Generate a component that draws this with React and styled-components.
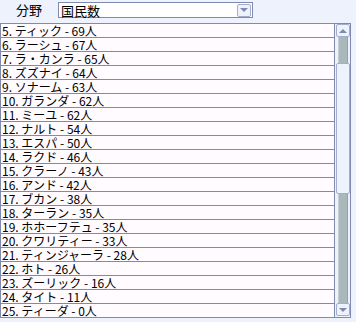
import React from "react";
import styled, { createGlobalStyle } from "styled-components";

const items = [
  ["5", "ティック", 69],
  ["6", "ラーシュ", 67],
  ["7", "ラ・カンラ", 65],
  ["8", "ズズナイ", 64],
  ["9", "ソナーム", 63],
  ["10", "ガランダ", 62],
  ["11", "ミーユ", 62],
  ["12", "ナルト", 54],
  ["13", "エスパ", 50],
  ["14", "ラクド", 46],
  ["15", "クラーノ", 43],
  ["16", "アンド", 42],
  ["17", "ブカン", 38],
  ["18", "ターラン", 35],
  ["19", "ホホーフテュ", 35],
  ["20", "クワリティー", 33],
  ["21", "ティンジャーラ", 28],
  ["22", "ホト", 26],
  ["23", "ズーリック", 16],
  ["24", "タイト", 11],
  ["25", "ティーダ", 0],
];

const GlobalStyle = createGlobalStyle`
  html, body {
    margin: 0;
    padding: 0;
    background: #eef2fc;
  }
  body {
    font-family: "Noto Sans CJK JP", "DejaVu Sans", sans-serif;
    color: #000;
  }
`;

const Page = styled.div`
  width: 356px;
  height: 322px;
  overflow: hidden;
`;

const Header = styled.div`
  display: flex;
  align-items: flex-start;
  height: 23px;
  padding-top: 2px;
  box-sizing: border-box;
`;

const Label = styled.span`
  width: 42px;
  padding-left: 16px;
  font-size: 13px;
  line-height: 16px;
`;

const Select = styled.div`
  width: 195px;
  height: 16px;
  box-sizing: border-box;
  border: 1px solid #7f8aae;
  background: #fff;
  display: flex;
  align-items: center;
  justify-content: space-between;
  padding: 0 1px 0 2px;
  font-size: 13px;
`;

const ArrowButton = styled.div`
  width: 14px;
  height: 13px;
  box-sizing: border-box;
  border: 1px solid #a3add0;
  border-radius: 2px;
  background: #eef2fc;
  display: flex;
  align-items: center;
  justify-content: center;
`;

const Arrow = styled.div`
  width: 0;
  height: 0;
  border-left: 4px solid transparent;
  border-right: 4px solid transparent;
  ${(p) =>
    p.$up
      ? "border-bottom: 4px solid #7f8aae;"
      : "border-top: 4px solid #7f8aae;"}
`;

const ListBox = styled.div`
  display: flex;
  width: 351px;
  height: 295px;
  box-sizing: border-box;
  border: 1px solid #7f8aae;
  border-bottom: none;
`;

const Rows = styled.div`
  width: 334px;
  box-sizing: border-box;
  border-right: 1px solid #7f8aae;
  background: #fffbff;
`;

const Row = styled.div`
  height: 14px;
  box-sizing: border-box;
  border-bottom: 1px solid #7f8aae;
  padding-left: 1px;
  font-size: 12px;
  line-height: 13px;
  white-space: nowrap;
`;

const ScrollBar = styled.div`
  width: 15px;
  box-sizing: border-box;
  border-bottom: 1px solid #7f8aae;
  display: flex;
  flex-direction: column;
  align-items: center;
  padding: 0 0 1px 1px;
`;

const Track = styled.div`
  flex: ${(p) => p.$grow};
  width: 10px;
  background: #a8b8bb;
  border-left: 1px solid #c4cfd2;
  border-right: 1px solid #95a3a8;
  box-sizing: border-box;
`;

const Thumb = styled.div`
  height: 131px;
  width: 14px;
  box-sizing: border-box;
  border: 1px solid #a3add0;
  border-radius: 2px;
  background: #eef2fc;
`;

export default function App() {
  return (
    <Page>
      <GlobalStyle />
      <Header>
        <Label>分野</Label>
        <Select>
          <span>国民数</span>
          <ArrowButton>
            <Arrow />
          </ArrowButton>
        </Select>
      </Header>
      <ListBox>
        <Rows>
          {items.map(([n, name, c]) => (
            <Row key={n}>
              {n}. {name} - {c}人
            </Row>
          ))}
        </Rows>
        <ScrollBar>
          <ArrowButton>
            <Arrow $up />
          </ArrowButton>
          <Track $grow="26" />
          <Thumb />
          <Track $grow="109" />
          <ArrowButton>
            <Arrow />
          </ArrowButton>
        </ScrollBar>
      </ListBox>
    </Page>
  );
}
